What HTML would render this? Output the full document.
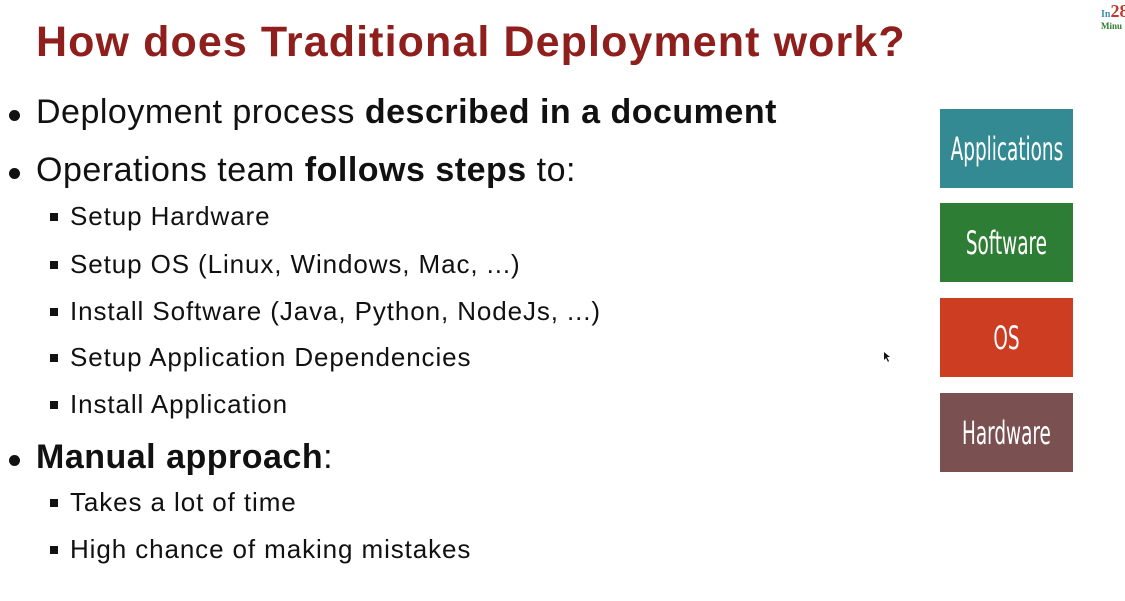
<!DOCTYPE html>
<html><head><meta charset="utf-8"><style>
html,body{margin:0;padding:0;background:#fff;width:1125px;height:601px;overflow:hidden;position:relative;font-family:"Liberation Sans","DejaVu Sans",sans-serif;color:#111}
.t{position:absolute;white-space:nowrap}
h1{position:absolute;left:36px;top:18px;margin:0;font-size:43px;font-weight:bold;color:#8e1f1c;white-space:nowrap;letter-spacing:1.1px}
.l1{font-size:34px;left:36px;letter-spacing:0.5px}
.l1:before{content:"";position:absolute;left:-27px;top:17px;width:11px;height:11px;border-radius:50%;background:#111}
.l2{font-size:26px;left:70px;letter-spacing:0.9px}
.l2:before{content:"";position:absolute;left:-20px;top:12px;width:8px;height:8px;background:#111}
.box{position:absolute;left:940px;width:133px;height:79px;color:#fff;font-family:"DejaVu Sans Condensed","Liberation Sans Narrow",sans-serif;font-size:32px;display:flex;align-items:center;justify-content:center}
.box span{display:inline-block;transform:scaleX(0.64);white-space:nowrap}
</style></head><body>
<h1>How does Traditional Deployment work?</h1>
<div class="t l1" style="top:93px">Deployment process <b>described in a document</b></div>
<div class="t l1" style="top:151px">Operations team <b>follows steps</b> to:</div>
<div class="t l2" style="top:201px">Setup Hardware</div>
<div class="t l2" style="top:249px">Setup OS (Linux, Windows, Mac, ...)</div>
<div class="t l2" style="top:296px">Install Software (Java, Python, NodeJs, ...)</div>
<div class="t l2" style="top:342px">Setup Application Dependencies</div>
<div class="t l2" style="top:389px">Install Application</div>
<div class="t l1" style="top:438px"><b>Manual approach</b>:</div>
<div class="t l2" style="top:487px">Takes a lot of time</div>
<div class="t l2" style="top:534px">High chance of making mistakes</div>
<div class="box" style="top:109px;background:#348a92"><span>Applications</span></div>
<div class="box" style="top:203px;background:#2e7d34"><span>Software</span></div>
<div class="box" style="top:298px;background:#cd3d22"><span>OS</span></div>
<div class="box" style="top:393px;background:#7b5050"><span>Hardware</span></div>
<div class="t" style="left:1101px;top:2px;font-family:'Liberation Serif',serif;font-weight:bold;line-height:1"><span style="color:#3a8fb0;font-size:10px">In</span><span style="color:#c0392b;font-size:18px">28</span></div>
<div class="t" style="left:1101px;top:21px;font-family:'Liberation Serif',serif;font-weight:bold;font-size:9px;color:#2e7d32">Minu</div>
<svg class="t" style="left:883px;top:351px" width="8" height="12"><path d="M1 1 L1 9 L3 7 L5 11 L6 10 L4 6 L7 6 Z" fill="#111"/></svg>
</body></html>
